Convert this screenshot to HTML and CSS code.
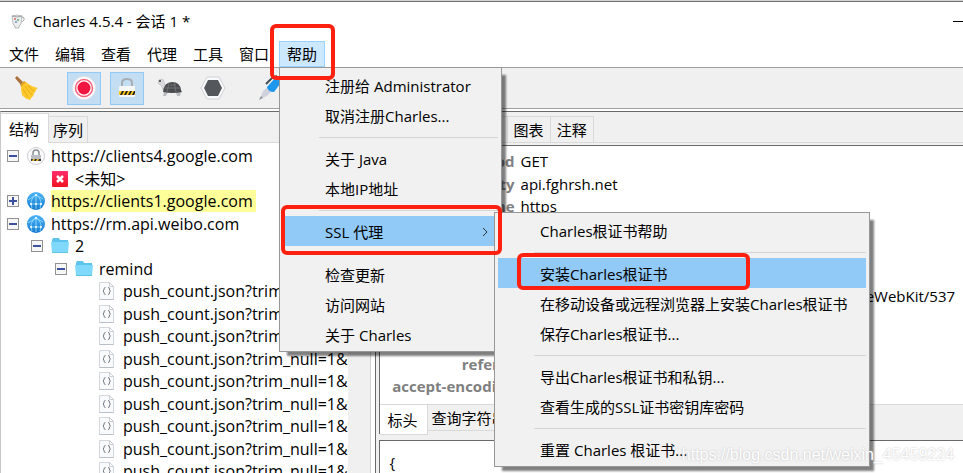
FILE: index.html
```html
<!DOCTYPE html>
<html lang="zh-CN">
<head>
    <meta charset="UTF-8">
    <meta name="viewport" content="width=device-width, initial-scale=1.0">
    <title>Charles 4.5.4 - 会话 1 *</title>
    <link rel="stylesheet" href="styles.css">
</head>
<body>

<!-- Shared icons -->
<svg class="icon-defs" aria-hidden="true">
    <defs>
        <linearGradient id="globeFill" x1="0" y1="0" x2="0" y2="1">
            <stop offset="0" stop-color="#4db4f5"/>
            <stop offset="1" stop-color="#1478cf"/>
        </linearGradient>
        <linearGradient id="crossFill" x1="0" y1="0" x2="0" y2="1">
            <stop offset="0" stop-color="#ff2d6f"/>
            <stop offset="1" stop-color="#f0141f"/>
        </linearGradient>
    </defs>
    <symbol id="globe" viewBox="0 0 18 18">
        <circle cx="9" cy="9" r="9" fill="url(#globeFill)"/>
        <path d="M9 3C5 5 4 9 4 12M9 3c4 2 5 6 5 9M9 3v9M3 12h12M1 8l8-5 7 4M4 12l1 4M14 12l-1 4M9 12v5" fill="none" stroke="#9be4ff" stroke-width="0.8"/>
        <g fill="#fff"><circle cx="9" cy="3" r="1"/><circle cx="4" cy="12" r="1"/><circle cx="9" cy="12" r="1"/><circle cx="14" cy="12" r="1"/></g>
    </symbol>
    <symbol id="folder" viewBox="0 0 18 18">
        <path d="M1 3l1-2h6l1 2h8v12H1z" fill="#5cc4ec"/>
        <path d="M0 5h18l-1 11H1z" fill="#80d8fb"/>
        <path d="M1 15h16v1H1z" fill="#5fc3e8"/>
    </symbol>
    <symbol id="json" viewBox="0 0 18 18">
        <path d="M.5 0.5h10l4 4v13H.5z" fill="#f9fafc" stroke="#d3d7dd"/>
        <path d="M10.500 .5v4h4z" fill="#fff" stroke="#c9ced6"/>
        <path d="M.5 17.500h14" stroke="#b8bfc9"/>
        <path d="M6.500 5.500q-1.500 0-1.500 1.500v1l-1 1 1 1v1q0 1.500 1.500 1.500M9 5.500q1.500 0 1.500 1.500v1l1 1-1 1v1q0 1.500-1.500 1.500" fill="none" stroke="#777e88"/>
    </symbol>
</svg>

<div class="window">
    <header class="titlebar">
        <svg class="app-icon" width="14" height="16" viewBox="0 0 14 16">
            <path d="M1 3q5-2 10 0l-1 8-2 2v2H4v-2l-2-2z" fill="#eceeee" stroke="#a9adaf" stroke-width="0.8"/>
            <path d="M1 3q5 2 10 0M11 4q3 0 2 3l-2 2" fill="none" stroke="#8d9193" stroke-width="0.8"/>
            <circle cx="4" cy="6" r="1" fill="#d66"/><circle cx="7" cy="7" r="1" fill="#5aa777"/><circle cx="5" cy="9" r="1" fill="#6d8cc4"/>
        </svg>
        <h1>Charles 4.5.4 - 会话 1 *</h1>
        <button class="minimize" aria-label="最小化"></button>
    </header>

    <nav class="menubar">
        <button>文件</button>
        <button>编辑</button>
        <button>查看</button>
        <button>代理</button>
        <button>工具</button>
        <button>窗口</button>
        <div class="menu-holder">
            <button class="open">帮助</button>
            <div class="menu help-menu">
                <button>注册给 Administrator</button>
                <button>取消注册Charles...</button>
                <hr>
                <button>关于 Java</button>
                <button>本地IP地址</button>
                <hr>
                <div class="menu-holder">
                    <button class="active">SSL 代理
                        <svg width="7" height="10" viewBox="0 0 7 10"><path d="M1 1l4 4-4 4" fill="none" stroke="#333"/></svg>
                    </button>
                    <div class="menu ssl-menu">
                        <button>Charles根证书帮助</button>
                        <hr>
                        <div class="menu-holder">
                            <button class="active">安装Charles根证书</button>
                            <span class="mark mark-install"></span>
                        </div>
                        <button>在移动设备或远程浏览器上安装Charles根证书</button>
                        <button>保存Charles根证书...</button>
                        <hr>
                        <button>导出Charles根证书和私钥...</button>
                        <button>查看生成的SSL证书密钥库密码</button>
                        <hr>
                        <button>重置 Charles 根证书...</button>
                    </div>
                    <span class="mark mark-ssl"></span>
                </div>
                <hr>
                <button>检查更新</button>
                <button>访问网站</button>
                <button>关于 Charles</button>
            </div>
            <span class="mark mark-help"></span>
        </div>
    </nav>

    <div class="toolbar">
        <button class="group-end" aria-label="清除">
            <svg width="26" height="26" viewBox="0 0 26 26">
                <path d="M2 3l2-2 6 6-2 3z" fill="#a9713b"/>
                <path d="M7 10l4-4 3 2-5 5z" fill="#e0a520"/>
                <path d="M8 12l5-5q4 4 12 6-2 1-2 2 0 2-2 3 0 3-2 4l-2 3q-5-1-8-5-1-4-1-8z" fill="#fcc92c"/>
                <path d="M12 11q4 6 7 9M15 10q2 4 6 6M10 14l5 8" fill="none" stroke="#e9aa14"/>
            </svg>
        </button>
        <button class="on" aria-label="录制">
            <svg width="24" height="24" viewBox="0 0 24 24">
                <circle cx="12" cy="12" r="11.500" fill="#fff" stroke="#e2e2e8"/>
                <circle cx="12" cy="12" r="8.500" fill="#fff" stroke="#f5647c" stroke-width="1.500"/>
                <circle cx="12" cy="12" r="6.500" fill="#ef173f"/>
            </svg>
        </button>
        <button class="on" aria-label="SSL 代理">
            <svg width="18" height="20" viewBox="0 0 18 20">
                <path d="M4 9V5q0-4 5-4t5 4v4" fill="none" stroke="#a8adb4" stroke-width="2"/>
                <rect x="1" y="8" width="16" height="11" rx="1" fill="#f7f7f7"/>
                <rect x="1" y="13" width="16" height="4" fill="#ffc81e"/>
                <path d="M2 17l2-4h2l-2 4zM6 17l2-4h2l-2 4zM10 17l2-4h2l-2 4zM14 17l2-4h1v2l-1 2z" fill="#222"/>
            </svg>
        </button>
        <button aria-label="限速">
            <svg width="26" height="20" viewBox="0 0 26 20">
                <path d="M1 5q0-4 3-4t3 3l2 7-3 1-2-5q-2 0-3-2z" fill="#d9d9de" stroke="#b1b1b8" stroke-width="0.500"/>
                <circle cx="3" cy="3" r="1" fill="#333"/>
                <path d="M7 14h4l-2 4H6zM19 14h5l-1 4h-3z" fill="#bcbdc2"/>
                <path d="M6 14Q7 4 15 4t9 8l1 2q-9 2-19 0z" fill="#4c4d50"/>
                <path d="M8 10h15M12 5l-2 9M17 4l2 10M13 7h6" stroke="#77787c" fill="none" stroke-width="0.800"/>
            </svg>
        </button>
        <button class="group-end" aria-label="断点">
            <svg width="26" height="24" viewBox="0 0 26 24">
                <path d="M7 1h12l6 11-6 11H7L1 12z" fill="#f8f9fa" stroke="#cfd3d8"/>
                <path d="M8 4h10l4 8-4 8H8l-4-8z" fill="#54575c"/>
            </svg>
        </button>
        <button aria-label="编写">
            <svg width="26" height="26" viewBox="0 0 26 26">
                <path d="M2 24l3-8 6-5 4 4-6 6z" fill="#cfd2dc"/>
                <path d="M1 25l2-4 2 2z" fill="#8f939d"/>
                <path d="M9 12l9-10q5-2 7 3l-9 12q-6 0-7-5z" fill="#1d97ee"/>
                <path d="M8 9l6-6 5-2" fill="none" stroke="#454b54" stroke-width="2"/>
            </svg>
        </button>
    </div>

    <main class="split">
        <section class="pane tree-pane">
            <div class="tabs narrow-tabs">
                <button class="selected">结构</button>
                <button>序列</button>
            </div>
            <div class="tree-view">
                <ul class="tree">
                    <li><button class="toggle" aria-label="折叠"></button>
                        <svg class="icon" viewBox="0 0 18 18">
                            <circle cx="9" cy="9" r="8.500" fill="#fafafa" stroke="#cfcfd4"/>
                            <path d="M6 9V6q0-3 3-3t3 3v3" fill="none" stroke="#8c9095" stroke-width="1.500"/>
                            <rect x="4" y="8" width="10" height="6" fill="#b9bcc2"/>
                            <rect x="4" y="12" width="10" height="2" fill="#333"/>
                            <path d="M6 12h2l-1 2H5zM10 12h2l-1 2H9z" fill="#e9b92b"/>
                        </svg>
                        <span>https://clients4.google.com</span></li>
                    <li class="level-1"><span class="toggle-space"></span>
                        <svg class="icon" viewBox="0 0 18 18">
                            <rect x="1" y="1" width="16" height="16" rx="1" fill="url(#crossFill)"/>
                            <path d="M6 6l6 6M12 6l-6 6" stroke="#fff" stroke-width="2.500"/>
                        </svg>
                        <span>&lt;未知&gt;</span></li>
                    <li><button class="toggle closed" aria-label="展开"></button>
                        <svg class="icon"><use href="#globe"/></svg>
                        <span class="found">https://clients1.google.com</span></li>
                    <li><button class="toggle" aria-label="折叠"></button>
                        <svg class="icon"><use href="#globe"/></svg>
                        <span>https://rm.api.weibo.com</span></li>
                    <li class="level-1"><button class="toggle" aria-label="折叠"></button>
                        <svg class="icon"><use href="#folder"/></svg>
                        <span>2</span></li>
                    <li class="level-2"><button class="toggle" aria-label="折叠"></button>
                        <svg class="icon"><use href="#folder"/></svg>
                        <span>remind</span></li>
                    <li class="level-3"><span class="toggle-space"></span><svg class="icon"><use href="#json"/></svg><span>push_count.json?trim_null=1&amp;w</span></li>
                    <li class="level-3"><span class="toggle-space"></span><svg class="icon"><use href="#json"/></svg><span>push_count.json?trim_null=1&amp;w</span></li>
                    <li class="level-3"><span class="toggle-space"></span><svg class="icon"><use href="#json"/></svg><span>push_count.json?trim_null=1&amp;w</span></li>
                    <li class="level-3"><span class="toggle-space"></span><svg class="icon"><use href="#json"/></svg><span>push_count.json?trim_null=1&amp;w</span></li>
                    <li class="level-3"><span class="toggle-space"></span><svg class="icon"><use href="#json"/></svg><span>push_count.json?trim_null=1&amp;w</span></li>
                    <li class="level-3"><span class="toggle-space"></span><svg class="icon"><use href="#json"/></svg><span>push_count.json?trim_null=1&amp;w</span></li>
                    <li class="level-3"><span class="toggle-space"></span><svg class="icon"><use href="#json"/></svg><span>push_count.json?trim_null=1&amp;w</span></li>
                    <li class="level-3"><span class="toggle-space"></span><svg class="icon"><use href="#json"/></svg><span>push_count.json?trim_null=1&amp;w</span></li>
                    <li class="level-3"><span class="toggle-space"></span><svg class="icon"><use href="#json"/></svg><span>push_count.json?trim_null=1&amp;w</span></li>
                </ul>
                <div class="scrollbar"></div>
            </div>
        </section>

        <section class="pane detail-pane">
            <div class="tabs">
                <button>概述</button>
                <button>内容</button>
                <button>摘要</button>
                <button>图表</button>
                <button>注释</button>
            </div>
            <div class="request">
                <table class="headers">
                    <tr><th>:method</th><td>GET</td></tr>
                    <tr><th>:authority</th><td>api.fghrsh.net</td></tr>
                    <tr><th>:scheme</th><td>https</td></tr>
                    <tr><th></th><td></td></tr>
                    <tr><th></th><td></td></tr>
                    <tr><th></th><td></td></tr>
                    <tr><th></th><td>Mozilla/5.0 (Windows NT 6.1; Win64; x64; zh) AppleWebKit/537</td></tr>
                    <tr><th></th><td></td></tr>
                    <tr><th></th><td></td></tr>
                    <tr><th>referer</th><td></td></tr>
                    <tr><th>accept-encoding</th><td></td></tr>
                </table>
                <div class="tabs narrow-tabs bottom-tabs">
                    <button class="selected">标头</button>
                    <button>查询字符串</button>
                </div>
            </div>
            <pre class="response">{</pre>
        </section>
    </main>

    <span class="watermark">https://blog.csdn.net/weixin_45459224</span>
</div>

</body>
</html>
```
FILE: styles.css
```css
* {
    box-sizing: border-box;
}
body {
    margin: 0;
    font-family: "Open Sans", "Noto Sans CJK SC", sans-serif;
    font-size: 15px;
    line-height: 22px;
    color: #000;
    background-color: #fff;
}
button {
    margin: 0;
    padding: 0;
    border: none;
    background: none;
    color: inherit;
    font: inherit;
    white-space: nowrap;
}
.icon-defs {
    position: absolute;
    width: 0;
    height: 0;
}
.window {
    position: relative;
    display: flex;
    flex-direction: column;
    height: 100vh;
    overflow: hidden;
    border-top: 1px solid #d4d4d4;
}

/* title bar */
.titlebar {
    display: flex;
    align-items: center;
    gap: 8px;
    flex: none;
    height: 39px;
    padding-left: 11px;
    border-top: 1px solid #707070;
}
.titlebar h1 {
    flex: 1;
    margin: 0;
    font-size: 15px;
    font-weight: 400;
}
.minimize {
    width: 10px;
    height: 1px;
    background-color: #000;
}

/* menus */
.menubar {
    display: flex;
    align-items: flex-end;
    flex: none;
    height: 27px;
    padding-left: 1px;
}
.menubar > button {
    height: 26px;
    padding: 0 8px;
}
.menubar > .menu-holder {
    margin-left: 2px;
}
.menubar .open {
    display: block;
    height: 26px;
    background-color: #cce8ff;
    border: 1px solid #99d1ff;
    padding: 0 7px;
}
.menu-holder {
    position: relative;
}
.menu {
    position: absolute;
    z-index: 2;
    padding: 2px 3px;
    background-color: #f1f1f1;
    border: 1px solid #979797;
    box-shadow: 6px 6px 2px -2px rgba(0, 0, 0, 0.5);
}
.menu button {
    display: flex;
    align-items: center;
    justify-content: space-between;
    width: 100%;
    height: 30px;
    padding: 1px 9px 0 42px;
    text-align: left;
}
.menu button.active {
    background-color: #91c9f7;
}
.menu hr {
    height: 1px;
    margin: 7px 0 5px 36px;
    border: none;
    background-color: #d4d4d4;
}
.help-menu {
    top: 100%;
    left: 0;
    width: 223px;
}
.ssl-menu {
    top: -4px;
    left: calc(100% - 4px);
    width: 376px;
}

/* red frames */
.mark {
    position: absolute;
    z-index: 3;
    border: 4px solid #ff2010;
    border-radius: 6px;
    pointer-events: none;
}
.mark-help {
    top: -17px;
    left: -9px;
    right: -10px;
    height: 56px;
}
.mark-ssl {
    top: -11px;
    bottom: -9px;
    left: -2px;
    right: -4px;
}
.mark-install {
    top: -5px;
    bottom: -2px;
    left: 19px;
    width: 233px;
}

/* toolbar */
.toolbar {
    display: flex;
    align-items: center;
    gap: 9px;
    flex: none;
    height: 42px;
    padding-left: 9px;
    background-color: #f0f0f0;
    border-top: 1px solid #a0a0a0;
    border-bottom: 1px solid #a0a0a0;
}
.toolbar button {
    display: flex;
    align-items: center;
    justify-content: center;
    width: 34px;
    height: 33px;
}
.toolbar .group-end {
    margin-right: 15px;
}
.toolbar .on {
    background-color: #c3ddf3;
    border: 1px solid #91c9f7;
}

/* split view */
.split {
    display: flex;
    flex: 1;
    gap: 3px;
    min-height: 0;
    margin-top: 2px;
    background-color: #f0f0f0;
}
.pane {
    display: flex;
    flex-direction: column;
    min-width: 0;
    border-top: 1px solid #696969;
}
.tree-pane {
    flex: 0 0 39%;
    border-left: 1px solid #c8c8c8;
    border-right: 1px solid #696969;
}
.detail-pane {
    flex: 1;
}
.tabs {
    display: flex;
    align-items: flex-end;
    flex: none;
    height: 31px;
    background-color: #f0f0f0;
    border-bottom: 1px solid #d9d9d9;
}
.tabs button {
    height: 26px;
    padding: 0 6px;
    border-top: 1px solid #d9d9d9;
    border-right: 1px solid #d9d9d9;
}
.tabs.narrow-tabs button {
    padding: 0 4px;
}
.tabs.narrow-tabs .selected {
    height: 30px;
    margin-bottom: -1px;
    padding: 0 9px 0 8px;
    background-color: #fff;
}
.tree-view {
    display: flex;
    flex: 1;
    min-height: 0;
    background-color: #fff;
}
.tree {
    flex: 1;
    min-width: 0;
    margin: 0;
    padding: 2px 0 0;
    overflow: hidden;
    list-style: none;
    font-size: 16px;
}
.scrollbar {
    flex: none;
    width: 23px;
    margin-right: 4px;
    background-color: #f0f0f0;
    border-right: 1px solid #d0d0d0;
}
.tree li {
    display: flex;
    align-items: center;
    height: 22px;
    padding-left: 6px;
    white-space: nowrap;
}
.tree li:nth-child(even) {
    height: 23px;
}
.tree .level-1 {
    padding-left: 30px;
}
.tree .level-2 {
    padding-left: 54px;
}
.tree .level-3 {
    padding-left: 78px;
}
.toggle, .toggle-space {
    flex: none;
    width: 12px;
    height: 12px;
    margin-right: 8px;
}
.toggle {
    border: 1px solid #919191;
    background: linear-gradient(#3c50a0, #3c50a0) center / 8px 2px no-repeat, #f6f6f6;
}
.toggle.closed {
    background: linear-gradient(#3c50a0, #3c50a0) center / 8px 2px no-repeat,
        linear-gradient(#3c50a0, #3c50a0) center / 2px 8px no-repeat, #f6f6f6;
}
.icon {
    flex: none;
    width: 18px;
    height: 18px;
    margin-right: 6px;
}
.found {
    padding-right: 3px;
    background-color: #ffff99;
}

/* request and response */
.detail-pane > .tabs {
    margin-bottom: 2px;
}
.request {
    flex: none;
    background-color: #fff;
    border-top: 1px solid #696969;
    border-left: 1px solid #696969;
}
.headers {
    width: 100%;
    table-layout: fixed;
    border-collapse: collapse;
    border-top: 4px solid #fff;
}
.headers th, .headers td {
    height: 22px;
    padding: 0;
    overflow: hidden;
    white-space: nowrap;
}
.headers tr:nth-child(even) th {
    height: 23px;
}
.headers th {
    width: 141px;
    padding-right: 6px;
    color: #808080;
    font-weight: 700;
    text-align: right;
}
.bottom-tabs {
    align-items: flex-start;
    height: 30px;
    margin-top: 7px;
    border-top: 1px solid #d9d9d9;
    border-bottom: none;
}
.bottom-tabs button {
    border-top: none;
    border-bottom: 1px solid #d9d9d9;
}
.response {
    flex: 1;
    margin: 6px 0 0;
    padding: 10px;
    font: inherit;
    background-color: #fff;
    border-top: 1px solid #696969;
    border-left: 1px solid #696969;
}

.watermark {
    position: absolute;
    z-index: 4;
    right: 9px;
    bottom: 7px;
    font-family: "Liberation Sans", sans-serif;
    font-size: 16px;
    color: #fff;
    text-shadow: 0 0 2px #bbb;
}
```
